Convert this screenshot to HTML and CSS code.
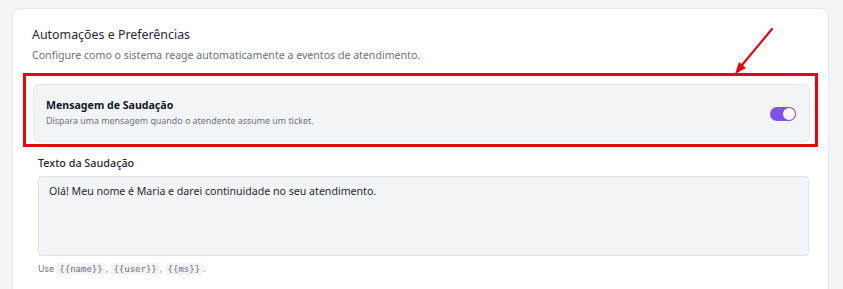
FILE: index.html
```html
<!DOCTYPE html>
<html lang="pt">
<head>
<meta charset="utf-8">
<link rel="stylesheet" href="styles.css">
</head>
<body>
<div class="page">
  <section class="card">
    <h2 class="title">Automações e Preferências</h2>
    <p class="subtitle">Configure como o sistema reage automaticamente a eventos de atendimento.</p>
    <div class="highlight">
      <div class="setting">
        <div class="setting-text">
          <div class="setting-name">Mensagem de Saudação</div>
          <div class="setting-desc">Dispara uma mensagem quando o atendente assume um ticket.</div>
        </div>
        <span class="toggle"><span class="knob"></span></span>
      </div>
    </div>
    <div class="field">
      <label class="field-label">Texto da Saudação</label>
      <div class="textarea">Olá! Meu nome é Maria e darei continuidade no seu atendimento.</div>
      <div class="help">Use <code>{{name}}</code>, <code>{{user}}</code>, <code>{{ms}}</code>.</div>
    </div>
    <svg class="arrow" width="50" height="56" viewBox="0 0 50 56">
      <line x1="42" y1="4" x2="12" y2="40" stroke="#e30613" stroke-width="2.2" stroke-linecap="round"/>
      <polygon points="5,49 9,37 16,43" fill="#e30613"/>
    </svg>
  </section>
</div>
</body>
</html>
```

FILE: styles.css
```css
* { box-sizing: border-box; }
html, body { margin: 0; padding: 0; }
body {
  background: #f3f4f6;
  font-family: "Noto Sans", "Open Sans", sans-serif;
  color: #111827;
  width: 843px;
  height: 289px;
  overflow: hidden;
}
.page { padding: 8px 14px 0 12px; }
.card {
  position: relative;
  background: #ffffff;
  border: 1px solid #e5e7eb;
  border-radius: 8px;
  padding: 17px 10px 40px 10px;
  height: 320px;
}
.title {
  margin: 0 0 0 9px;
  font-size: 12.4px;
  font-weight: 400;
  line-height: 18px;
  color: #1f2937;
}
.subtitle {
  margin: 3px 0 0 9px;
  font-size: 10.6px;
  line-height: 16px;
  color: #6b7280;
}
.highlight {
  margin-top: 10px;
  border: 3px solid #e30613;
  padding: 8px 5px 2px 7px;
}
.setting {
  display: flex;
  align-items: center;
  justify-content: space-between;
  background: #f3f4f6;
  border: 1px solid #e5e7eb;
  border-radius: 6px;
  padding: 10px 13px 12px 12px;
  height: 58px;
}
.setting-name {
  font-size: 10.6px;
  font-weight: 700;
  line-height: 16px;
  color: #111827;
}
.setting-desc {
  margin-top: 1px;
  font-size: 8.9px;
  line-height: 13px;
  color: #6b7280;
}
.toggle {
  position: relative;
  width: 26px;
  height: 14px;
  border-radius: 7px;
  background: #8152e6;
  margin-top: 4px;
}
.knob {
  position: absolute;
  right: 1px;
  top: 1px;
  width: 12px;
  height: 12px;
  border-radius: 50%;
  background: #ffffff;
  box-shadow: 0 0 0 0.5px #7c4ddf;
}
.field { margin: 8px 9px 0 15px; }
.field-label {
  display: block;
  font-size: 10.8px;
  font-weight: 500;
  line-height: 16px;
  color: #1f2937;
}
.textarea {
  margin-top: 5px;
  height: 80px;
  background: #f3f4f6;
  border: 1px solid #e0e2e6;
  border-radius: 4px;
  padding: 6px 10px;
  font-size: 10.6px;
  line-height: 16px;
  color: #1f2937;
}
.help {
  margin-top: 6px;
  font-size: 9px;
  line-height: 14px;
  color: #6b7280;
}
.help code {
  font-family: "DejaVu Sans Mono", monospace;
  font-size: 9px;
  background: #f3f4f6;
  padding: 1px 2px;
  margin: 0 1px;
  border-radius: 2px;
}
.arrow {
  position: absolute;
  left: 717px;
  top: 16px;
}
```
